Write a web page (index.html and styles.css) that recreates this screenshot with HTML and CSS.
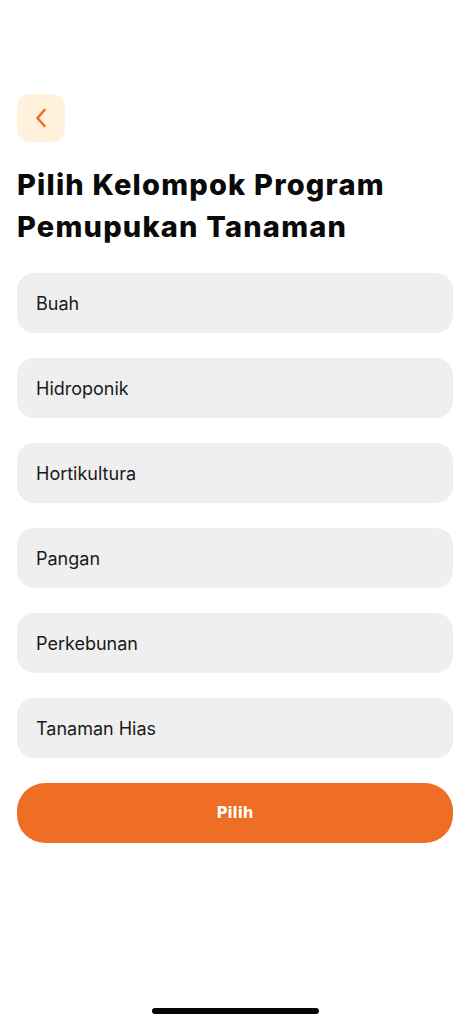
FILE: index.html
```html
<!DOCTYPE html>
<html lang="id">
<head>
<meta charset="utf-8">
<title>Pilih Kelompok Program</title>
<link rel="stylesheet" href="styles.css">
</head>
<body>
<div class="screen">
  <button class="back" aria-label="Kembali">
    <svg width="14" height="20" viewBox="0 0 14 20"><path d="M10.5 2 L3.5 10 L10.5 18" fill="none" stroke="#EE6E25" stroke-width="2.6" stroke-linecap="round" stroke-linejoin="round"/></svg>
  </button>
  <h1 class="title">Pilih Kelompok Program Pemupukan Tanaman</h1>
  <ul class="options">
    <li class="option">Buah</li>
    <li class="option">Hidroponik</li>
    <li class="option">Hortikultura</li>
    <li class="option">Pangan</li>
    <li class="option">Perkebunan</li>
    <li class="option">Tanaman Hias</li>
  </ul>
  <button class="primary">Pilih</button>
  <div class="home-indicator"></div>
</div>
</body>
</html>
```
FILE: styles.css
```css
* { box-sizing: border-box; }
html, body { margin: 0; padding: 0; background: #fff; }
body { font-family: "Inter", "Open Sans", sans-serif; color: #111; }
.screen {
  min-height: 1024px;
  display: flex;
  flex-direction: column;
  padding: 94px 18px 0 17px;
}
.back {
  width: 48px;
  height: 48px;
  border: none;
  border-radius: 13px;
  background: #FFF1DC;
  display: flex;
  align-items: center;
  justify-content: center;
  padding: 0;
}
.title {
  margin: 22px 0 0;
  font-size: 29px;
  line-height: 42px;
  font-weight: 800;
  letter-spacing: 1.2px;
  color: #0a0a0a;
  max-width: 420px;
}
.options {
  list-style: none;
  margin: 25px 0 0;
  padding: 0;
  display: flex;
  flex-direction: column;
  gap: 25px;
}
.option {
  height: 60px;
  border-radius: 17px;
  background: #EFEFEF;
  display: flex;
  align-items: center;
  padding-left: 19px;
  font-size: 18px;
  color: #1a1a1a;
}
.primary {
  margin-top: 25px;
  height: 60px;
  border: none;
  border-radius: 28px;
  background: #EE6E25;
  color: #fff;
  font-family: "DejaVu Sans", sans-serif;
  font-weight: 700;
  font-size: 15px;
}
.home-indicator {
  margin: auto auto 10px;
  width: 167px;
  height: 6px;
  border-radius: 3px;
  background: #050505;
}
```
